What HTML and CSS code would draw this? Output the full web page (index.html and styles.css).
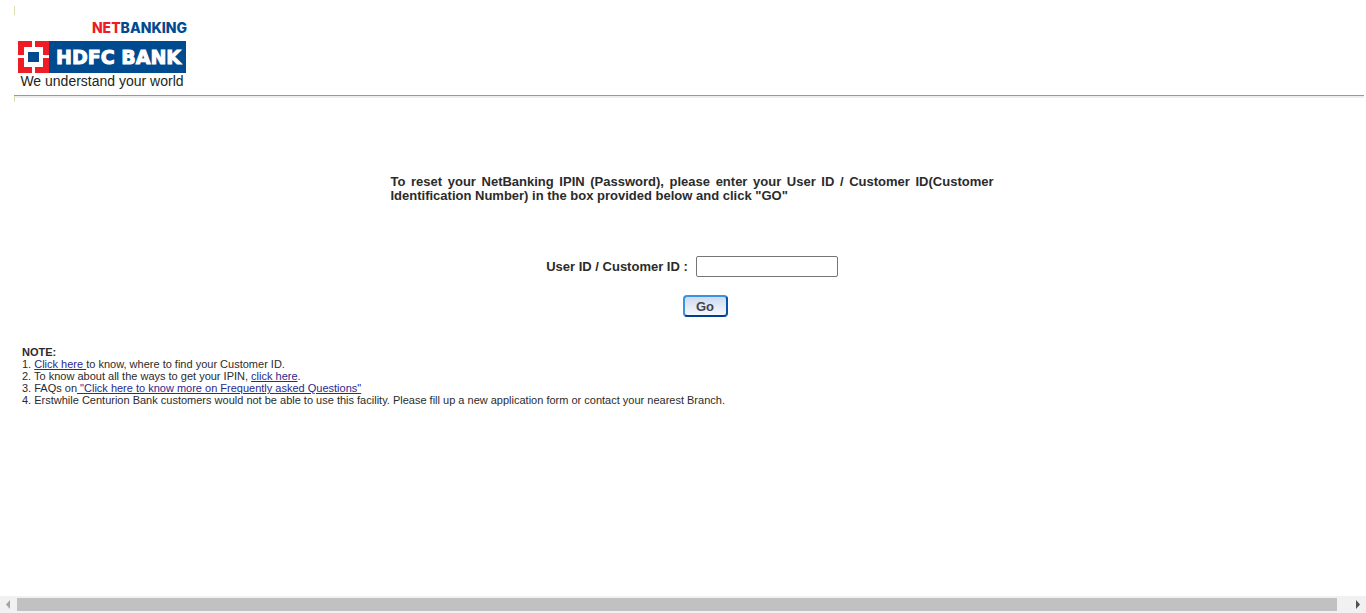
FILE: index.html
```
<!DOCTYPE html>
<html lang="en">
<head>
<meta charset="utf-8">
<title>NetBanking - Reset IPIN</title>
<link rel="stylesheet" href="styles.css">
</head>
<body>
<header class="header">
  <svg class="logo" width="169" height="72" viewBox="0 0 169 72" role="img" aria-label="HDFC Bank NetBanking">
    <text class="logo-net" x="169" y="15" text-anchor="end"><tspan fill="#ee1c24">NET</tspan><tspan fill="#004a8f">BANKING</tspan></text>
    <path fill="#004a8f" d="M31 23H168V55H31Z"/>
    <path fill="#ee1c24" d="M0 23H31V55H0Z"/>
    <path fill="#fff" d="M6 29H25V49H6Z"/>
    <path fill="#fff" d="M14 23H17V31H14ZM14 47H17V55H14ZM0 37H8V40H0ZM23 37H31V40H23Z"/>
    <path fill="#004a8f" d="M10 34H21V44H10Z"/>
    <text class="logo-name" x="38" y="46" fill="#fff">HDFC BANK</text>
    <text class="logo-tag" x="84" y="68" text-anchor="middle" fill="#231f20">We understand your world</text>
  </svg>
</header>
<main class="content">
  <form class="reset">
    <p class="intro">To reset your NetBanking IPIN (Password), please enter your User ID / Customer ID(Customer Identification Number) in the box provided below and click "GO"</p>
    <div class="field">
      <label for="customer-id">User ID / Customer ID :</label>
      <input class="field-input" id="customer-id" type="text">
    </div>
    <button class="go" type="button">Go</button>
  </form>
  <section class="notes">
    <strong>NOTE:</strong>
    <p>1. <a href="#">Click here </a>to know, where to find your Customer ID.</p>
    <p>2. To know about all the ways to get your IPIN, <a href="#">click here</a>.</p>
    <p>3. FAQs on<a href="#"> "Click here to know more on Frequently asked Questions"</a></p>
    <p>4. Erstwhile Centurion Bank customers would not be able to use this facility. Please fill up a new application form or contact your nearest Branch.</p>
  </section>
</main>
<div class="scrollbar" aria-hidden="true">
  <svg width="17" height="17" viewBox="0 0 17 17"><path fill="#a3a3a3" d="M10 4V13L6 8.500Z"/></svg>
  <div class="thumb"></div>
  <svg class="arrow-right" width="17" height="17" viewBox="0 0 17 17"><path fill="#505050" d="M7 4V13L11 8.500Z"/></svg>
</div>
</body>
</html>
```
FILE: styles.css
```
body {
  margin: 0;
  min-height: 100vh;
  display: flex;
  flex-direction: column;
  background: #fff;
  color: #2b2b2b;
  font-family: "Liberation Sans", Arial, sans-serif;
}
.header {
  margin: 6px 2px 0 14px;
  padding: 12px 0 5px 4px;
  border-bottom: 1px solid #999;
  box-shadow: 0 2px 0 #eee;
  background: linear-gradient(#dcdcae, #dcdcae) 0 0 / 1px 9px no-repeat;
}
.logo { display: block; }
.logo-net { font: 800 14px Inter, sans-serif; }
.logo-name { font: bold 19px "DejaVu Sans", sans-serif; stroke: #fff; stroke-width: 1px; }
.logo-tag { font: 14px "Liberation Sans", Arial, sans-serif; }
.content {
  flex: 1;
  background: linear-gradient(#dcdcae, #dcdcae) 14px 0 / 1px 6px no-repeat;
}
.reset {
  box-sizing: border-box;
  width: 621px;
  max-width: 90%;
  margin: 0 auto;
  padding: 79px 0 0 18px;
  display: flex;
  flex-direction: column;
  font-size: 13px;
  font-weight: bold;
}
.intro {
  margin: 0;
  line-height: 14px;
  text-align: justify;
}
.field {
  display: flex;
  align-items: center;
  justify-content: center;
  gap: 8px;
  margin-top: 53px;
}
.field-input {
  box-sizing: border-box;
  width: 142px;
  height: 21px;
  padding: 1px 2px;
  border: 1px solid #767676;
  border-radius: 2px;
  background: #fff;
}
.go {
  align-self: center;
  width: 45px;
  height: 22px;
  margin: 18px 0 0 26px;
  padding: 0;
  border: 2px solid;
  border-color: #3b92e0 #0653a5 #003f8a #3b92e0;
  border-radius: 4px;
  background: linear-gradient(#cfdaf0, #f5f8ff);
  color: #44444c;
  font: bold 13px "Liberation Sans", Arial, sans-serif;
}
.notes {
  margin: 29px 22px 0;
  font-size: 11px;
  line-height: 12px;
}
.notes strong { display: block; }
.notes p { margin: 0; }
.notes a { color: #2a2a8c; }
.scrollbar {
  display: flex;
  height: 17px;
  background: #f1f1f1;
}
.thumb {
  flex: 1;
  margin: 2px 0;
  background: #c1c1c1;
}
.arrow-right { margin-left: 12px; }
```
